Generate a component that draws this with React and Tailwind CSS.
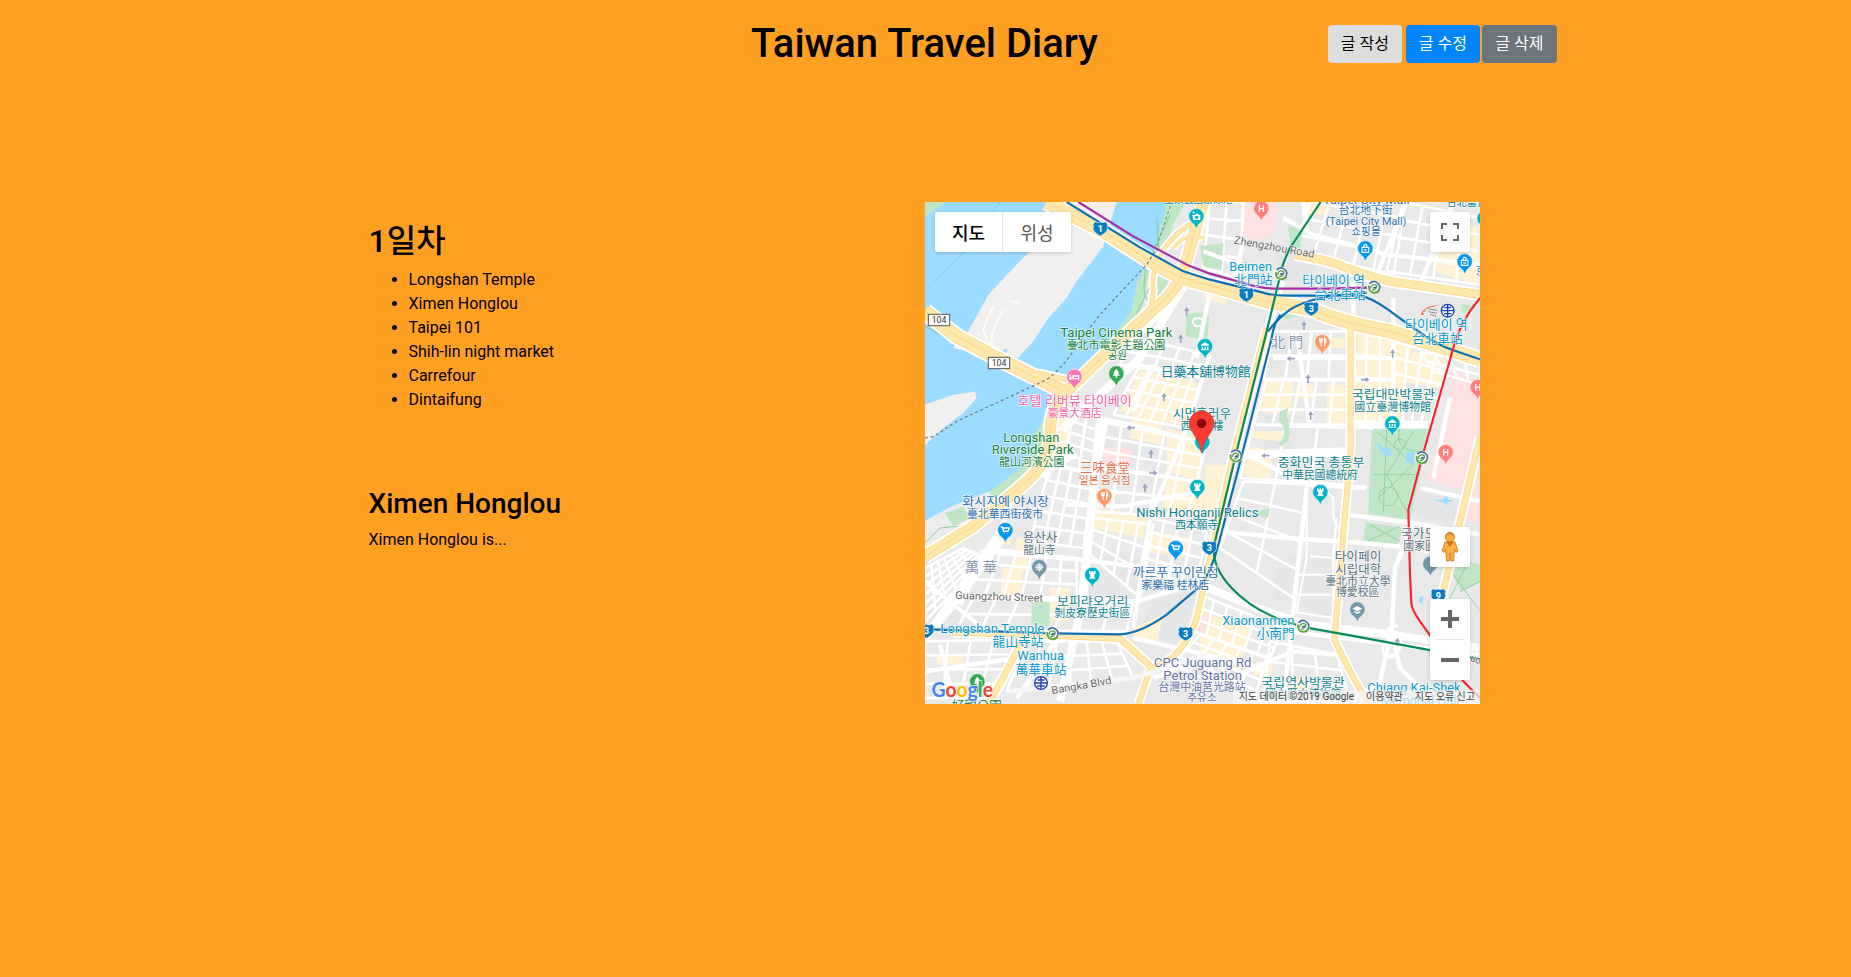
import React from "react";

/* ---------- map geometry (three units per screen pixel) ---------- */

const lerp = (a, b, t) => a + (b - a) * t;

// Street grid inside a quad [x1,y1, x2,y2, x3,y3, x4,y4] (clockwise from top left).
function gridPath(q, cols, rows) {
  const [ax, ay, bx, by, cx, cy, dx, dy] = q;
  let d = "";
  for (let i = 0; i <= cols; i++) {
    const t = i / cols;
    d += `M${lerp(ax, bx, t)} ${lerp(ay, by, t)}L${lerp(dx, cx, t)} ${lerp(dy, cy, t)}`;
  }
  for (let j = 0; j <= rows; j++) {
    const t = j / rows;
    d += `M${lerp(ax, dx, t)} ${lerp(ay, dy, t)}L${lerp(bx, cx, t)} ${lerp(by, cy, t)}`;
  }
  return d;
}

const GRIDS = [
  [[660, 500, 850, 540, 800, 690, 580, 650], 6, 4],
  [[640, 420, 870, 470, 850, 540, 600, 500], 5, 2],
  [[540, 670, 860, 735, 830, 850, 530, 800], 5, 3],
  [[420, 620, 540, 665, 520, 830, 390, 790], 3, 5],
  [[1060, 400, 1290, 400, 1290, 545, 1030, 545], 4, 2],
  [[1040, 545, 1290, 545, 1285, 680, 1000, 680], 5, 3],
  [[1300, 400, 1420, 420, 1420, 670, 1295, 670], 3, 4],
  [[1420, 430, 1590, 480, 1530, 680, 1420, 670], 4, 5],
  [[1000, 680, 1290, 690, 1280, 860, 960, 840], 3, 2],
  [[970, 850, 1160, 860, 1120, 1200, 900, 1050], 2, 4],
  [[390, 800, 520, 830, 490, 1050, 330, 1030], 4, 5],
  [[530, 810, 830, 850, 800, 960, 520, 940], 5, 2],
  [[520, 960, 700, 980, 660, 1200, 500, 1060], 4, 3],
  [[690, 960, 860, 1000, 830, 1160, 660, 1120], 4, 4],
  [[200, 1050, 470, 1080, 470, 1200, 140, 1190], 6, 3],
  [[15, 1110, 130, 1050, 200, 1080, 15, 1270], 6, 6],
  [[160, 1200, 640, 1210, 620, 1300, 110, 1295], 7, 2],
  [[15, 1330, 290, 1325, 230, 1500, 15, 1500], 4, 4],
  [[320, 1330, 590, 1330, 640, 1440, 260, 1480], 6, 3],
  [[840, 1190, 1090, 1290, 1050, 1380, 820, 1300], 6, 3],
  [[840, 1310, 1040, 1380, 1000, 1510, 760, 1400], 5, 4],
  [[1050, 1330, 1250, 1370, 1290, 1510, 1030, 1510], 3, 3],
  [[1170, 12, 1450, 60, 1420, 230, 1120, 160], 5, 3],
  [[1450, 12, 1680, 60, 1680, 260, 1400, 220], 4, 4],
  [[870, 12, 970, 12, 960, 240, 850, 210], 2, 4],
  [[1500, 460, 1680, 500, 1680, 560, 1540, 520], 4, 2],
];

const CREAM = [
  "660,520 830,550 820,690 600,640", "640,650 730,665 720,740 630,720", "740,690 850,720 840,850 740,820", "400,650 450,660 440,790 395,770",
  "1030,550 1120,550 1110,650 1010,640", "1130,560 1180,560 1180,600 1130,600", "1300,400 1480,420 1440,680 1300,670",
  "1150,12 1240,12 1220,50 1160,50", "1260,200 1430,230 1420,260 1270,220", "1560,60 1680,90 1680,260 1540,220",
  "1480,460 1590,480 1560,570 1450,550", "1200,420 1280,420 1280,450 1200,450", "1220,560 1290,560 1290,680 1220,680",
  "1000,700 1090,700 1080,730 990,720", "960,740 1060,760 1050,850 970,830",
  "850,12 870,12 850,130 840,140", "850,270 930,285 920,320 850,300", "530,930 680,950 670,1020 520,990",
  "740,840 860,860 840,960 730,930", "250,1110 310,1110 300,1200 240,1190", "390,1170 450,1170 450,1270 395,1270",
  "220,1010 280,1020 270,1040 210,1035", "690,1000 810,1020 790,1080 680,1060", "860,800 930,800 900,960 850,950",
  "840,1240 990,1290 960,1420 840,1380", "640,1290 730,1250 710,1340 640,1330", "1010,1390 1060,1400 1050,1440 1000,1430",
  "1090,1440 1160,1440 1190,1510 1110,1510", "1640,860 1680,870 1680,970 1620,950", "50,1370 130,1370 130,1400 50,1400",
  "290,1020 330,1025 320,1120 280,1110", "1040,420 1060,420 1040,500 1020,500",
];

const PLAIN = [
  "1010,400 1150,360 1160,480 1060,500 1000,470", "1040,640 1120,640 1110,760 1030,740", "550,660 730,700 720,800 535,770",
  "480,1040 700,1090 650,1210 490,1190", "15,1210 170,1180 180,1290 15,1290", "700,1200 830,1180 780,1330 640,1350",
  "1080,1080 1240,1080 1230,1260 1060,1200", "1480,860 1620,890 1600,980 1470,950", "1060,150 1190,180 1180,260 1080,250",
];

const MINOR =
  "M800 250L740 330L640 430M870 470L800 690L690 960L640 1290M560 665L500 1010L470 1300M870 280L830 480M700 500L640 640M1060 480H1420M1040 545H1420M1130 400L1170 690M1420 300V660M1300 250V400M1160 870L1120 1240L1090 1510M980 770L1160 860L1340 870M1280 950L1480 975L1680 1010M900 1000L1100 1020L1330 1035L1480 1050L1640 1090M1500 870L1680 910M1480 970L1425 1110L1415 1300L1440 1410L1540 1510M1415 1300L1380 1450L1300 1510M450 590L540 660L700 695L870 745M15 1050L120 960L300 870L470 770M120 1220L330 820M15 1330L130 1190L260 1010M180 1060L480 1085L850 1130M430 920L610 925L840 880M150 1200L650 1210L850 1150M420 1310L290 1500M640 1320L860 1370L1040 1420M15 1420L290 1380M970 130L940 250M1090 60L1180 110L1400 170L1680 200M1460 12L1370 230M1600 12L1500 260M15 1150L200 1300M60 1340L100 1500M1590 600L1540 840M1100 1300L1680 1370M1100 1280L1410 1310M860 1470L1120 1360L1250 1370M1290 680L1360 690M1150 12L1160 100M850 160L960 200M700 1440L860 1370L1000 1500";

const WIDE =
  "M1085 250L1040 400L930 800L870 1060L870 1150M840 1160L1010 1230L1160 1280L1420 1310L1680 1350M15 1320L230 1020M380 840L380 600M800 250L660 480L430 690M540 660L490 1200L420 1510M1290 680H1530M970 770L1290 760";

const HIGHWAYS = [
  ["M850 12L790 220Q770 280 700 335L560 465L430 590Q385 640 392 720Q380 800 310 860L160 985L15 1075", 34],
  ["M380 12L560 105L700 195Q780 245 870 262L1040 310Q1130 325 1180 335Q1250 370 1410 400L1560 445L1680 485", 40],
  ["M15 340L110 415L250 490L430 580", 40],
  ["M355 525L440 545", 16],
  ["M1125 170Q1190 180 1240 195Q1330 230 1400 248L1680 290", 26],
  ["M1292 370V756L1275 950L1243 1325L1290 1420L1345 1518", 18],
  ["M1680 720L1625 950L1550 1260", 20],
  ["M100 1303L400 1312L600 1322L700 1412", 20],
  ["M310 1320L260 1420L205 1518", 20],
  ["M1040 390L940 770L880 1040L830 1260Q800 1350 740 1390L690 1415L655 1518", 18],
  ["M855 60Q790 80 750 130Q690 200 700 280L690 350", 14],
  ["M850 120Q800 100 760 150", 10],
];

/* ---------- pins ---------- */

const GLYPHS = {
  fork: <path d="M-8-13V-5Q-8-1-4-1V12M-4-13V-1M0-13V-5Q0-1-4-1M7 12V-13Q12-8 10 0H7" fill="none" stroke="#fff" strokeWidth="3.4" />,
  bed: <path d="M-13-8V9M-13 5H13V9M13 5V-3H-4V3H-13M-9-2H-8" fill="none" stroke="#fff" strokeWidth="4" />,
  tree: <path d="M0-15L9-3H5L11 6H2V13H-2V6H-11L-5-3H-9Z" fill="#fff" />,
  museum: <path d="M0-13L12-5V-2H-12V-5ZM-10 1H-6V8H-10ZM-2 1H2V8H-2ZM6 1H10V8H6ZM-12 9H12V12H-12Z" fill="#fff" />,
  rook: <path d="M-10-12H-5V-8H-2V-12H2V-8H5V-12H10V-4L6-1V5L10 11H-10L-6 5V-1L-10-4Z" fill="#fff" />,
  cart: <path d="M-14-10H-9L-5 3H8L12-7H-8M-3 9H-2M7 9H8" fill="none" stroke="#fff" strokeWidth="4.4" />,
  bag: <path d="M-10-4H10V11H-10ZM-5-4Q-5-13 0-13Q5-13 5-4M-4 2Q0 7 4 2" fill="none" stroke="#fff" strokeWidth="3.4" />,
  camera: <path d="M-12-4H-4L-2-8H6L8-4H12V11H-10V1H-12ZM1-2A5 5 0 1 0 1.1-2ZM-12-12H-9V-15H-7V-12H-4V-10H-7V-7H-9V-10H-12Z" fill="#fff" fillRule="evenodd" />,
  cap: <path d="M0-11L15-3L0 5L-15-3ZM-9 3L0 8L9 3V8L0 13L-9 8Z" fill="#fff" />,
  wheel: <path d="M0-12V12M-12 0H12M-8-8L8 8M8-8L-8 8M9 0A9 9 0 1 1-9 0A9 9 0 1 1 9 0" fill="none" stroke="#fff" strokeWidth="2.8" />,
  h: <path d="M-6-10V10M6-10V10M-6 0H6" fill="none" stroke="#fff" strokeWidth="3.6" />,
  none: null,
};

const TEAL = "#00b5c8";
const PINS = [
  [829, 55, TEAL, "camera"], [463, 537, "#ff74b4", "bed"], [589, 527, "#34a853", "tree"], [855, 445, TEAL, "museum"],
  [847, 733, TEAL, "none"], [1024, 32, "#ff7f7f", "h"], [1336, 152, "#0096f5", "bag"], [1634, 191, "#0096f5", "bag"],
  [1694, 62, TEAL, "none"], [1207, 433, "#ff9666", "fork"], [1417, 677, TEAL, "museum"], [1673, 568, "#ff7f7f", "h"],
  [1577, 763, "#ff7f7f", "h"], [553, 895, "#ff9666", "fork"], [832, 868, TEAL, "rook"], [256, 997, "#0096f5", "cart"],
  [358, 1108, "#7398a8", "wheel"], [517, 1131, TEAL, "rook"], [767, 1051, "#0096f5", "cart"], [172, 1451, "#34a853", "tree"],
  [1201, 883, TEAL, "rook"], [1312, 1235, "#7398a8", "cap"], [1531, 1098, "#7398a8", "none"],
];

function Pin({ x, y, color, glyph }) {
  return (
    <g transform={`translate(${x} ${y})`}>
      <path d="M0 37Q-4 24-15 17A23 23 0 1 1 15 17Q4 24 0 37Z" fill={color} stroke="#fff" strokeOpacity=".7" strokeWidth="2" />
      {GLYPHS[glyph]}
    </g>
  );
}

function Station({ x, y }) {
  return (
    <g transform={`translate(${x} ${y})`} fill="none" strokeLinecap="round">
      <circle r="21" fill="#fff" />
      <path d="M-12-12A17 17 0 0 1 15 8Q14 11 9 13" stroke="#3f6f9e" strokeWidth="5" />
      <path d="M-15-3A16 16 0 0 0-3 16Q8 18 14 11" stroke="#66a844" strokeWidth="6" />
      <path d="M-10 2Q-8-10 3-8Q12-6 7 2Q2 10-4 8" stroke="#5e9e4c" strokeWidth="4" />
      <path d="M-5 3Q0-4 8-2Q4 7-5 3Z" fill="#2e6291" />
    </g>
  );
}

function Rail({ x, y }) {
  return (
    <g transform={`translate(${x} ${y})`} fill="none" stroke="#1b3fb5" strokeWidth="4">
      <circle r="19" fill="#fff" />
      <path d="M0-19V19M-19 0H19M-10-9H10M-11 9H11" />
    </g>
  );
}

function Shield({ x, y, n }) {
  return (
    <g transform={`translate(${x} ${y})`}>
      <path d="M-16-21Q-8-16 0-20Q8-16 16-21L22-13Q19-5 22 1Q20 12 0 22Q-20 12-22 1Q-19-5-22-13Z" fill="#0a7cc0" stroke="#fff" strokeWidth="1.5" />
      <text y="10" textAnchor="middle" fontSize="27" fontWeight="700" fill="#fff">{n}</text>
    </g>
  );
}

function Route({ x, y }) {
  return (
    <g transform={`translate(${x} ${y})`}>
      <rect x="-32" y="-17" width="64" height="34" fill="#fff" stroke="#555" strokeWidth="3" />
      <text y="9" textAnchor="middle" fontSize="26" fill="#333">104</text>
    </g>
  );
}

const ARROWS = [
  [800, 340, 0], [782, 422, 0], [732, 597, 0], [632, 689, -90], [693, 768, 0], [700, 825, 90], [675, 870, 0], [1152, 383, 0],
  [1112, 482, -90], [1164, 542, 0], [1336, 545, 90], [1418, 466, 0], [1172, 652, 0], [1036, 773, -90], [1432, 1332, 0],
];

/* ---------- labels: text, centre x, baseline y, size, width, colour, rotation ---------- */

const GREEN = "#12803a";
const CYAN = "#0598c9";
const MUS = "#0a7f8d";
const SHOP = "#2a6fb0";
const GRAY = "#54707c";
const LABELS = [
  ["Taipei Cinema Park", 589, 418, 39, 337, GREEN],
  ["臺北市電影主題公園", 588, 454, 33, 296, GREEN],
  ["공원", 592, 484, 31, 58, GREEN],
  ["호텔 리버뷰 타이베이", 464, 620, 38, 343, "#f45fa8"],
  ["豪景大酒店", 464, 656, 33, 162, "#f45fa8"],
  ["日藥本舖博物館", 857, 535, 39, 270, MUS],
  ["시먼훙러우", 846, 661, 38, 176, MUS],
  ["西門紅樓", 846, 696, 33, 128, MUS],
  ["Longshan", 334, 731, 38, 168, GREEN],
  ["Riverside Park", 338, 769, 38, 246, GREEN],
  ["龍山河濱公園", 335, 804, 33, 196, GREEN],
  ["三味食堂", 555, 822, 38, 150, "#e2704a"],
  ["일본 음식점", 554, 857, 32, 155, "#e2704a"],
  ["台北地下街", 1337, 49, 33, 162, SHOP],
  ["Taipei City Mall", 1339, 18, 33, 260, SHOP],
  ["(Taipei City Mall)", 1338, 81, 33, 242, SHOP],
  ["쇼핑몰", 1338, 112, 31, 88, SHOP],
  ["Zhengzhou Road", 1061, 158, 33, 244, "#666", 10],
  ["Beimen", 992, 220, 38, 128, CYAN],
  ["北門站", 1000, 259, 38, 114, CYAN],
  ["타이베이 역", 1241, 261, 38, 188, CYAN],
  ["台北車站", 1260, 302, 38, 154, CYAN],
  ["타이베이 역", 1549, 393, 38, 188, CYAN],
  ["台北車站", 1552, 434, 38, 152, CYAN],
  ["北 門", 1101, 447, 42, 98, "#8a97ad"],
  ["국립대만박물관", 1420, 603, 37, 250, MUS],
  ["國立臺灣博物館", 1418, 638, 33, 230, MUS],
  ["중화민국 총통부", 1203, 808, 37, 260, MUS],
  ["中華民國總統府", 1200, 843, 33, 226, MUS],
  ["화시지예 야시장", 257, 924, 37, 260, SHOP],
  ["臺北華西街夜市", 255, 959, 33, 228, SHOP],
  ["용산사", 360, 1033, 37, 104, GRAY],
  ["龍山寺", 358, 1068, 33, 96, GRAY],
  ["萬 華", 183, 1122, 42, 98, "#8a97ad"],
  ["Nishi Honganji Relics", 832, 958, 36, 367, MUS],
  ["西本願寺", 830, 992, 33, 128, MUS],
  ["까르푸 꾸이린점", 767, 1137, 37, 258, SHOP],
  ["家樂福 桂林店", 766, 1173, 33, 204, SHOP],
  ["Guangzhou Street", 237, 1207, 32, 264, "#666", 2],
  ["보피랴오거리", 518, 1223, 37, 214, MUS],
  ["剝皮寮歷史街區", 517, 1257, 33, 228, MUS],
  ["Longshan Temple", 217, 1304, 36, 312, CYAN],
  ["龍山寺站", 294, 1343, 38, 153, CYAN],
  ["Wanhua", 362, 1387, 37, 140, CYAN],
  ["萬華車站", 363, 1427, 38, 153, CYAN],
  ["Bangka Blvd", 486, 1473, 32, 182, "#666", -10],
  ["CPC Juguang Rd", 848, 1406, 37, 292, "#6272a5"],
  ["Petrol Station", 848, 1445, 37, 236, "#6272a5"],
  ["台灣中油莒光路站", 846, 1479, 33, 262, "#6272a5"],
  ["주유소", 846, 1509, 31, 88, "#6272a5"],
  ["Xiaonanmen", 1015, 1280, 37, 217, CYAN],
  ["小南門", 1067, 1319, 38, 114, CYAN],
  ["타이페이", 1314, 1089, 37, 140, GRAY],
  ["시립대학", 1315, 1127, 37, 138, GRAY],
  ["臺北市立大學", 1314, 1161, 33, 196, GRAY],
  ["博愛校區", 1313, 1195, 33, 130, GRAY],
  ["국가도서관", 1531, 1020, 37, 176, GRAY],
  ["國家圖書館", 1531, 1056, 33, 162, GRAY],
  ["국립역사박물관", 1149, 1466, 37, 250, MUS],
  ["國立歷史博物館", 1149, 1500, 33, 228, MUS],
  ["Chiang Kai-Shek", 1482, 1482, 36, 280, CYAN],
  ["Memorial Hall", 1500, 1520, 36, 236, CYAN],
  ["好親公園", 170, 1537, 36, 150, GREEN],
  ["玉泉公園游泳池", 835, 14, 33, 205, MUS],
  ["台北當代", 1640, 24, 33, 120, MUS],
  ["京站", 1699, 232, 33, 64, SHOP],
  ["uo", 1664, 1394, 32, 32, "#666", 20],
];

function CityMap() {
  return (
    <svg
      viewBox="15 12 1665 1506"
      className="block h-full w-full font-['Roboto','Noto_Sans_CJK_KR',sans-serif]"
      preserveAspectRatio="none"
      aria-hidden="true"
    >
      <rect x="0" y="0" width="1700" height="1530" fill="#e9e9ea" />
      {PLAIN.map((p) => <polygon key={p} points={p} fill="#e5e6e8" />)}
      {CREAM.map((p) => <polygon key={p} points={p} fill="#fff2d3" />)}
      <g fill="#fde2e1">
        <path d="M975 12H1070L1060 115L1010 130L965 105Z" />
        <path d="M1600 520L1680 545V700L1640 880L1520 845L1575 640Z" />
        <path d="M550 750L635 750L630 815L540 795Z" />
        <path d="M815 1240L870 1250L860 1310L805 1300Z" />
        <path d="M1640 730H1680V980L1620 960Z" />
      </g>
      <path d={GRIDS.map(([q, c, r]) => gridPath(q, c, r)).join("")} fill="none" stroke="#fff" strokeWidth="8" />
      <path d="M1240 1050L1240 1200M1160 870V1080L1130 1240M1130 1130H1240M1115 1190H1235M1110 1240L1240 1260M1250 960L1240 1080L1170 1075M1200 860L1240 900V960L1260 1000M1370 1200V1150H1320" fill="none" stroke="#fff" strokeWidth="6" />
      <g fill="#c1e6c7">
        <path d="M840 145L910 135L905 215L850 205Z" />
        <path d="M800 350Q830 335 868 350L862 425L797 415Z" />
        <path d="M1355 690L1530 688L1470 965L1345 948Z" />
        <path d="M1338 972L1450 990L1430 1042L1330 1034Z" />
        <path d="M335 1211L388 1211V1286L334 1280Z" />
        <path d="M1592 1120L1650 1090L1680 1100V1155L1625 1180Z" />
        <path d="M1105 85L1150 90L1140 150L1110 140Z" />
        <path d="M1080 350L1160 315L1150 350L1095 365Z" />
        <path d="M1190 350L1290 345V380L1230 375Z" />
        <path d="M1625 320L1655 320L1645 345L1625 345Z" />
        <path d="M1010 940L1050 930L1045 960L1015 955Z" />
        <path d="M1080 640L1105 630L1100 655Q1125 720 1085 745L1075 740Q1110 700 1075 665Z" />
      </g>
      <path d="M850 372Q845 355 825 362Q810 372 828 385Q850 380 850 402" fill="none" stroke="#fff" strokeWidth="6" />
      <g fill="none" stroke="#8ccc9b" strokeWidth="2.5">
        <path d="M1370 700L1480 800L1375 900M1400 695L1390 940M1480 700L1400 830L1460 940M1360 830H1500M1440 690Q1420 760 1500 760M1350 980L1440 1030M1440 985L1340 1030M1600 1130L1680 1240M1640 1100L1560 1260M1620 1180L1680 1150" />
        <circle cx="1405" cy="895" r="28" />
        <circle cx="1440" cy="740" r="16" />
      </g>
      <g fill="#9cdcff">
        <path d="M1365 735L1380 740L1395 752L1412 750L1412 778L1390 770Z" />
        <path d="M1460 762H1482V795H1458Z" />
        <path d="M1538 905L1565 906L1580 895L1585 905L1600 908L1580 914L1590 925L1565 912ZM1498 1198L1510 1195L1508 1216L1498 1215Z" />
        <path d="M355 1228L366 1220L364 1232Z" />
      </g>
      <path d={MINOR} fill="none" stroke="#fff" strokeWidth="13" strokeLinejoin="round" />
      <path d={WIDE} fill="none" stroke="#fff" strokeWidth="24" strokeLinejoin="round" />

      {/* river, banks and sand bars */}
      <path d="M15 12H745L700 170L650 270L635 345L600 415L470 520L410 585L380 650L350 770L300 830L170 905L15 970Z" fill="#9cdcff" />
      <path d="M740 12H800Q750 80 745 140L690 200L670 320L600 420H575L640 330L650 250L705 165Z" fill="#bfe5c5" />
      <path d="M380 650L350 700L330 790L210 880L215 905L320 840L370 780L385 700Z" fill="#bfe5c5" />
      <path d="M15 968L95 925L210 880L190 940L15 1060Z" fill="#ececec" />
      <path d="M75 945L130 926L150 960L100 985Z" fill="#bfe5c5" />
      <path d="M15 12H78L15 55Z" fill="#bfe5c5" />
      <g fill="#f1f0ef">
        <path d="M590 12L575 60L557 120L550 145L470 250L440 300L385 360L340 430L292 482L200 450L150 462L100 450L110 430L145 400L205 290L280 210L330 160L420 30L400 12Z" />
        <path d="M15 620L100 590L165 581L170 600L130 645L70 690L15 742Z" />
      </g>
      <path d="M250 455L265 452L258 464L248 462Z" fill="#9cdcff" />
      <path d="M222 320L190 390Q190 410 215 445M248 335L215 410V440M268 306L295 317" fill="none" stroke="#fff" strokeWidth="4" />
      <path d="M240 12L130 165L15 275" fill="none" stroke="#6fb2ec" strokeWidth="2" strokeDasharray="8 5" />
      <path d="M750 50L680 200Q660 300 690 310M710 60L720 200L640 370L600 430M15 385L250 510L410 600M110 985L60 990L15 1035" fill="none" stroke="#7dc890" strokeWidth="2.5" />
      <path d="M700 230Q730 215 750 240L715 300H685Z" fill="#c1e6c7" />

      {/* arterial roads */}
      {HIGHWAYS.map(([d, w]) => <path key={d} d={d} fill="none" stroke="#fff" strokeWidth={w + 12} strokeLinejoin="round" />)}
      {HIGHWAYS.map(([d, w]) => <path key={d} d={d} fill="none" stroke="#ffd680" strokeWidth={w} strokeLinejoin="round" />)}
      {HIGHWAYS.map(([d, w]) => <path key={d} d={d} fill="none" stroke="#ffe8ad" strokeWidth={w - 4} strokeLinejoin="round" />)}
      <path d={HIGHWAYS.slice(0, 3).map((h) => h[0]).join("")} fill="none" stroke="#ffd88a" strokeWidth="3" />
      <path d="M1435 1285A22 22 0 1 0 1415 1330A24 24 0 1 0 1435 1360M1390 1370A20 20 0 1 0 1420 1300" fill="none" stroke="#fff" strokeWidth="8" />
      <path d="M270 1480L640 1440L860 1370" fill="none" stroke="#f6f6fa" strokeWidth="14" />

      <path d="M15 720L40 716L110 670L380 545Q440 500 470 440L540 350L600 285L680 200L705 160" fill="none" stroke="#73777c" strokeWidth="3.5" strokeDasharray="9 8" />
      <path d="M710 145L755 12" fill="none" stroke="#5f8f76" strokeWidth="3" strokeDasharray="9 8" />
      {ARROWS.map(([x, y, r]) => (
        <path key={`${x}-${y}`} transform={`translate(${x} ${y}) rotate(${r})`} d="M0-13L8-1H2.500V13H-2.500V-1H-8Z" fill="#98a3bd" />
      ))}

      {/* metro lines */}
      <g fill="none" strokeWidth="6.500" strokeLinejoin="round">
        <path d="M475 12L640 115L800 200L870 227L960 252Q1020 272 1070 272H1220L1345 269" stroke="#aa2ba8" />
        <path d="M440 12L660 148L790 220L870 245L1030 284Q1060 293 1100 293H1320Q1350 298 1400 332L1480 390Q1550 440 1600 457L1680 484" stroke="#0a70b5" />
        <path d="M1340 285Q1180 290 1110 335Q1070 365 1044 400" stroke="#0a70b5" />
        <path d="M1082 350Q1062 372 1055 420L965 775L895 1040Q875 1120 840 1165L740 1250Q660 1307 600 1309L400 1306L30 1294" stroke="#0a70b5" />
        <path d="M1202 12L1110 150Q1085 200 1080 235L1040 400L950 760L885 1030Q868 1100 935 1170Q1000 1240 1110 1275L1160 1289L1290 1312L1680 1384" stroke="#068b57" />
        <path d="M1680 300Q1620 370 1600 450L1510 765L1465 935L1470 1130L1474 1215Q1475 1235 1500 1270L1630 1450L1680 1500" stroke="#f8232f" />
      </g>
      <path d="M1502 350Q1512 322 1560 322Q1528 328 1514 335L1518 340L1508 342L1512 350Z" fill="#f4643c" />
      <path d="M1525 333L1552 337M1525 341L1551 346M1530 349L1549 355" stroke="#888" strokeWidth="3" />

      <Shield x={541} y={92} n="1" />
      <Shield x={979} y={290} n="1" />
      <Shield x={1174} y={332} n="3" />
      <Shield x={868} y={1050} n="3" />
      <Shield x={797} y={1307} n="3" />
      <Shield x={20} y={1299} n="3" />
      <Shield x={1555} y={1193} n="9" />
      <Route x={57} y={366} />
      <Route x={237} y={495} />

      <Station x={1083} y={227} />
      <Station x={1362} y={268} />
      <Station x={947} y={774} />
      <Station x={1505} y={779} />
      <Station x={397} y={1307} />
      <Station x={1149} y={1285} />
      <Rail x={1583} y={338} />
      <Rail x={363} y={1455} />

      {PINS.map(([x, y, c, g]) => <Pin key={`${x}-${y}`} x={x} y={y} color={c} glyph={g} />)}

      {LABELS.map(([t, x, y, s, w, c, r]) => (
        <text
          key={`${t}-${x}-${y}`}
          x={x}
          y={y}
          fontSize={s}
          fill={c}
          textAnchor="middle"
          textLength={w}
          lengthAdjust="spacingAndGlyphs"
          stroke="#fff"
          strokeWidth="4"
          strokeOpacity=".8"
          strokeLinejoin="round"
          paintOrder="stroke"
          transform={r ? `rotate(${r} ${x} ${y})` : undefined}
        >
          {t}
        </text>
      ))}

      <path d="M845 764Q841 735 820 706Q808 690 808 676A37 37 0 0 1 882 676Q882 690 870 706Q849 735 845 764Z" fill="#fb3b33" stroke="#c9302b" strokeWidth="2" />
      <circle cx="845" cy="676" r="14" fill="#86090d" />
    </svg>
  );
}

/* ---------- map controls ---------- */

const CONTROL = "absolute rounded-[2px] bg-white shadow-[0_1px_4px_-1px_rgba(0,0,0,0.3)]";

function MapPanel() {
  return (
    <section className="relative h-[502px] w-[555px] shrink-0 overflow-hidden font-['Roboto','Noto_Sans_CJK_KR',sans-serif]">
      <CityMap />

      <div className={`${CONTROL} left-[10px] top-[10px] flex h-10 w-[136px] items-center text-[18px]`}>
        <button className="h-full w-[68px] border-r border-[#e6e6e6] pt-[2px] font-medium text-black">지도</button>
        <button className="h-full w-[68px] pt-[2px] text-[#565656]">위성</button>
      </div>

      <button className={`${CONTROL} right-[10px] top-[10px] flex size-10 items-center justify-center`} aria-label="전체화면">
        <svg viewBox="0 0 18 18" className="size-[18px]" fill="#666">
          <path d="M0 0V6H2V2H6V0ZM16 0H12V2H16V6H18V0ZM16 16H12V18H18V12H16ZM2 12H0V18H6V16H2Z" />
        </svg>
      </button>

      <button className={`${CONTROL} right-[10px] top-[325px] flex size-10 items-center justify-center`} aria-label="스트리트 뷰">
        <svg viewBox="0 0 18 32" className="h-8 w-[18px]">
          <path d="M4 11Q9 9 14 11L17 20L15 21.500L13.500 18L12.500 30H9.800L9 22L8.200 30H5.500L4.500 18L3 21.500L1 20Z" fill="#fbb03b" stroke="#b8741a" strokeWidth=".7" />
          <path d="M5.500 11.300L9 16L12.500 11.300Q9 10 5.500 11.300Z" fill="#e5672e" />
          <circle cx="9" cy="6" r="4.700" fill="#fbb03b" stroke="#b8741a" strokeWidth=".7" />
          <path d="M4.800 5Q9 2 13.200 5Q12 1.300 9 1.300T4.800 5Z" fill="#c98a35" />
        </svg>
      </button>

      <div className={`${CONTROL} right-[10px] top-[397px] flex h-[81px] w-10 flex-col items-center`}>
        <button className="flex h-10 w-full items-center justify-center" aria-label="확대">
          <svg viewBox="0 0 18 18" className="size-[18px]" fill="#666"><path d="M7 0H11V7H18V11H11V18H7V11H0V7H7Z" /></svg>
        </button>
        <div className="h-px w-[30px] bg-[#e6e6e6]" />
        <button className="flex h-10 w-full items-center justify-center" aria-label="축소">
          <svg viewBox="0 0 18 18" className="size-[18px]" fill="#666"><path d="M0 7H18V11H0Z" /></svg>
        </button>
      </div>

      <svg viewBox="0 0 66 26" className="absolute bottom-0 left-[5px] h-[26px] w-[66px] font-['Lato',sans-serif]" aria-label="Google">
        <text x="1.500" y="19" fontSize="21" fontWeight="700" textLength="61.500" lengthAdjust="spacingAndGlyphs" stroke="#fff" strokeWidth="1.500" strokeOpacity=".8" paintOrder="stroke">
          <tspan fill="#4285f4">G</tspan>
          <tspan fill="#ea4335">o</tspan>
          <tspan fill="#fbbc04">o</tspan>
          <tspan fill="#4285f4">g</tspan>
          <tspan fill="#34a853">l</tspan>
          <tspan fill="#ea4335">e</tspan>
        </text>
      </svg>

      <div className="absolute bottom-0 right-0 flex h-[14px] items-center gap-[12px] whitespace-nowrap bg-[#f5f5f5]/70 pl-[6px] pr-[5px] text-[10px] leading-[14px] text-[#444]">
        <span>지도 데이터 ©2019 Google</span>
        <span>이용약관</span>
        <span>지도 오류 신고</span>
      </div>
    </section>
  );
}

/* ---------- page ---------- */

const STOPS = ["Longshan Temple", "Ximen Honglou", "Taipei 101", "Shih-lin night market", "Carrefour", "Dintaifung"];

export default function App() {
  return (
    <div className="min-h-screen bg-[#ffa023] font-['Roboto','Noto_Sans_CJK_KR',sans-serif] text-base text-black">
      <header className="grid h-[202px] w-[1849px] grid-cols-[1fr_auto_1fr] items-start pt-5">
        <h1 className="col-start-2 text-[40px] font-medium leading-[48px]">Taiwan Travel Diary</h1>
        <div className="flex pl-[230px] pt-[5px]">
          <button className="mr-1 h-[38px] w-[74px] rounded-[4px] bg-[#dddddd] text-black">글 작성</button>
          <button className="mr-[2px] h-[38px] w-[74px] rounded-[4px] bg-[#0085ff] text-white">글 수정</button>
          <button className="h-[38px] w-[75px] rounded-[4px] bg-[#6c757d] text-white">글 삭제</button>
        </div>
      </header>

      <main className="flex pl-[368.500px]">
        <article className="w-[556.500px] shrink-0 pt-5">
          <h2 className="h-[46px] text-[32px] font-medium leading-[38.4px]">1일차</h2>
          <ul className="list-disc pl-10 leading-6">
            {STOPS.map((stop) => <li key={stop}>{stop}</li>)}
          </ul>
          <h3 className="mt-[75px] text-[28px] font-medium leading-[33.6px]">Ximen Honglou</h3>
          <p className="mt-[7px] leading-6">Ximen Honglou is...</p>
        </article>
        <MapPanel />
      </main>
    </div>
  );
}
